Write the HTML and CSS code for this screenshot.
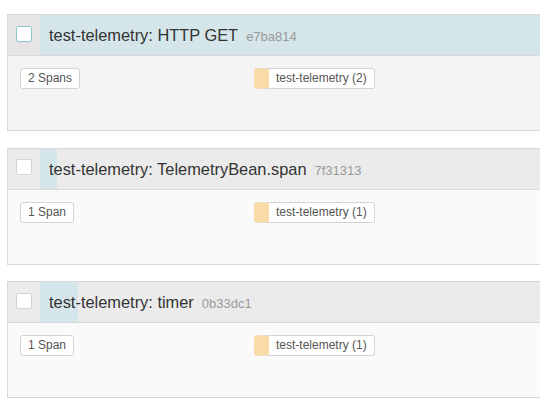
FILE: index.html
```html
<!DOCTYPE html>
<html>
<head>
<meta charset="utf-8">
<link rel="stylesheet" href="styles.css">
</head>
<body>
<div class="list">
  <div class="trace selected">
    <div class="trace-header">
      <div class="check-cell"><span class="checkbox"></span></div>
      <div class="title-cell">
        <div class="duration-bar" style="width:100%"></div>
        <span class="title">test-telemetry: HTTP GET</span>
        <span class="trace-id">e7ba814</span>
      </div>
    </div>
    <div class="trace-body">
      <div><span class="badge">2 Spans</span></div>
      <div><span class="badge service">test-telemetry (2)</span></div>
    </div>
  </div>

  <div class="trace">
    <div class="trace-header">
      <div class="check-cell"><span class="checkbox"></span></div>
      <div class="title-cell">
        <div class="duration-bar" style="width:17px"></div>
        <span class="title">test-telemetry: TelemetryBean.span</span>
        <span class="trace-id">7f31313</span>
      </div>
    </div>
    <div class="trace-body">
      <div><span class="badge">1 Span</span></div>
      <div><span class="badge service">test-telemetry (1)</span></div>
    </div>
  </div>

  <div class="trace">
    <div class="trace-header">
      <div class="check-cell"><span class="checkbox"></span></div>
      <div class="title-cell">
        <div class="duration-bar" style="width:38px"></div>
        <span class="title">test-telemetry: timer</span>
        <span class="trace-id">0b33dc1</span>
      </div>
    </div>
    <div class="trace-body">
      <div><span class="badge">1 Span</span></div>
      <div><span class="badge service">test-telemetry (1)</span></div>
    </div>
  </div>
</div>
</body>
</html>
```

FILE: styles.css
```css
html, body {
  margin: 0;
  padding: 0;
  background: #fff;
  overflow: hidden;
}
body {
  font-family: "Liberation Sans", Arial, sans-serif;
  color: #333;
}
.list {
  padding: 14px 0 0 7px;
  display: flex;
  flex-direction: column;
  gap: 16.5px;
}
.trace {
  border: 1px solid #d8d8d8;
  border-right: 0;
  background: #fafafa;
}
.trace-header {
  display: flex;
  height: 40px;
  background: #ebebeb;
  border-bottom: 1px solid #d8d8d8;
}
.check-cell {
  width: 32px;
  flex: none;
  display: flex;
  align-items: center;
  padding-left: 8px;
  box-sizing: border-box;
}
.checkbox {
  width: 16px;
  height: 16px;
  box-sizing: border-box;
  border: 1px solid #d4d4d4;
  border-radius: 2px;
  background: #fff;
  margin-top: -3px;
}
.title-cell {
  position: relative;
  flex: 1;
  display: flex;
  align-items: center;
  padding-left: 9px;
}
.duration-bar {
  position: absolute;
  left: 0;
  top: 0;
  bottom: 0;
  background: #d5e6ea;
}
.title {
  position: relative;
  font-size: 16.4px;
  color: #333;
  padding-top: 1px;
}
.trace-id {
  position: relative;
  font-size: 13px;
  color: #999;
  margin-left: 8px;
  padding-top: 3px;
}
.trace-body {
  height: 74px;
  box-sizing: border-box;
  padding: 12px;
  display: grid;
  grid-template-columns: 234px 1fr;
  align-items: start;
}
.badge {
  display: inline-block;
  height: 21px;
  line-height: 19px;
  box-sizing: border-box;
  padding: 0 7px;
  font-size: 12px;
  color: #555;
  background: #fff;
  border: 1px solid #d4d4d4;
  border-radius: 3px;
}
.badge.service {
  border-left: 15px solid #f8dba6;
}
.selected {
  background: #f4f4f4;
}
.selected .trace-header {
  background: #e5e5e5;
}
.selected .checkbox {
  border-color: #8ec7c7;
}
```
